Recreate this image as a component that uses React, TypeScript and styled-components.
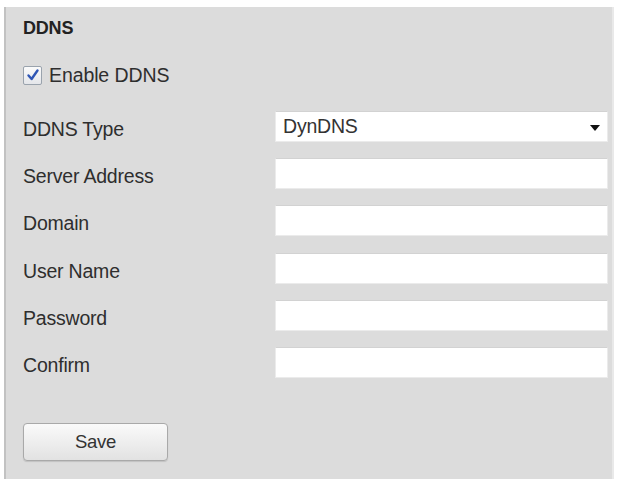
import {Fragment} from 'react';
import {createGlobalStyle, styled} from 'styled-components';

const GlobalStyle = createGlobalStyle`
	html, body {
		margin: 0;
		padding: 0;
		background: #ffffff;
	}
	body {
		font-family: "Liberation Sans", Arial, sans-serif;
		color: #2e2e2e;
	}
`;

const Panel = styled.section`
	box-sizing: border-box;
	width: 610px;
	height: 472px;
	margin: 7px 0 0 4px;
	padding: 10px 0 0 17px;
	background: #dcdcdc;
	border-left: 2px solid #c2c2c2;
	border-right: 2px solid #e9e9e9;
	display: flex;
	flex-direction: column;
`;

const Title = styled.h2`
	margin: 0;
	font-size: 18px;
	line-height: 22px;
	font-weight: bold;
	color: #222;
	letter-spacing: -0.2px;
`;

const CheckRow = styled.label`
	display: flex;
	align-items: center;
	gap: 7px;
	height: 22px;
	margin-top: 25px;
	font-size: 19.5px;
	letter-spacing: -0.1px;
`;

const Box = styled.span`
	box-sizing: border-box;
	width: 19px;
	height: 19px;
	border: 1px solid #9aa3ad;
	border-radius: 2px;
	background: linear-gradient(#fbfbfb, #e4e6ea);
	display: flex;
	align-items: center;
	justify-content: center;
`;

const Form = styled.div`
	display: grid;
	grid-template-columns: 252px 333px;
	grid-auto-rows: 31px;
	row-gap: 16.2px;
	margin-top: 25px;
`;

const Label = styled.div`
	font-size: 19.5px;
	letter-spacing: -0.2px;
	padding-top: 6px;
	display: flex;
	align-items: center;
`;

const Field = styled.div`
	box-sizing: border-box;
	background: #ffffff;
	border: 1px solid #ebebeb;
	border-top-color: #d2d2d2;
	position: relative;
	display: flex;
	align-items: center;
	padding-left: 7px;
	font-size: 19.5px;
	letter-spacing: -0.2px;
	color: #333;
`;

const Arrow = styled.span`
	position: absolute;
	right: 7px;
	top: 13px;
	width: 0;
	height: 0;
	border-left: 5px solid transparent;
	border-right: 5px solid transparent;
	border-top: 6px solid #111;
`;

const SaveButton = styled.button`
	box-sizing: border-box;
	width: 145px;
	height: 38px;
	margin-top: 45px;
	border: 1px solid #a9a9a9;
	border-radius: 4px;
	background: linear-gradient(#fafafa, #e2e2e2);
	box-shadow: 0 1px 1px rgba(0, 0, 0, 0.12);
	font-family: "Liberation Sans", Arial, sans-serif;
	font-size: 18.5px;
	color: #333;
	letter-spacing: -0.3px;
	padding: 0;
`;

const fields = ['Server Address', 'Domain', 'User Name', 'Password', 'Confirm'];

function App() {
	return (
		<>
			<GlobalStyle />
			<Panel>
				<Title>DDNS</Title>
				<CheckRow>
					<Box>
						<svg width="14" height="14" viewBox="0 0 14 14">
							<path
								d="M2.5 7.5 L5.6 11 L11.5 2.5"
								fill="none"
								stroke="#2f56b5"
								strokeWidth="2.4"
								strokeLinecap="round"
								strokeLinejoin="round"
							/>
						</svg>
					</Box>
					Enable DDNS
				</CheckRow>
				<Form>
					<Label>DDNS Type</Label>
					<Field>
						DynDNS
						<Arrow />
					</Field>
					{fields.map((name) => (
						<Fragment key={name}>
							<Label>{name}</Label>
							<Field />
						</Fragment>
					))}
				</Form>
				<SaveButton>Save</SaveButton>
			</Panel>
		</>
	);
}

export default App;
